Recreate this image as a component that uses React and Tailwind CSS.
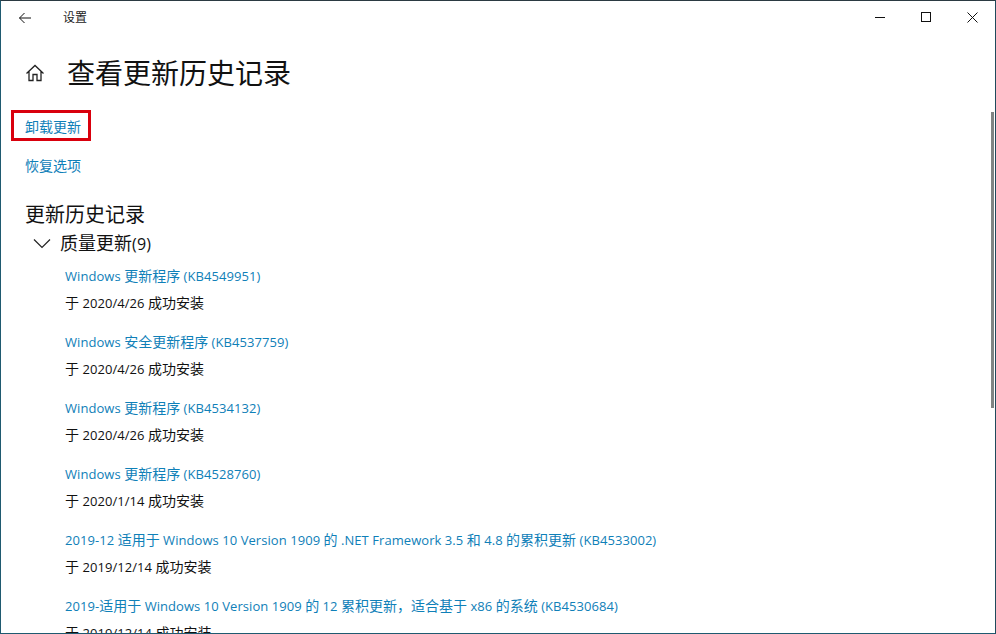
const LATIN = /([\u0020-\u007e]+)/;
function Mixed({ text, latin = "text-[13px] tracking-[0.06px]" }) {
  return text.split(LATIN).map((part, i) =>
    i % 2 === 1 ? <span key={i} className={latin}>{part}</span> : part
  );
}
function Update({ title, date }) {
  return (
    <div className="flex flex-col">
      <div className="h-[26px] leading-[26px] text-[14px] text-[#0f80b8] whitespace-nowrap"><Mixed text={title} /></div>
      <div className="h-[26px] mt-[1px] leading-[26px] text-[14px] text-[#111] whitespace-nowrap"><Mixed text={date} /></div>
    </div>
  );
}
const updates = [
  ["Windows 更新程序 (KB4549951)", "于 2020/4/26 成功安装"],
  ["Windows 安全更新程序 (KB4537759)", "于 2020/4/26 成功安装"],
  ["Windows 更新程序 (KB4534132)", "于 2020/4/26 成功安装"],
  ["Windows 更新程序 (KB4528760)", "于 2020/1/14 成功安装"],
  ["2019-12 适用于 Windows 10 Version 1909 的 .NET Framework 3.5 和 4.8 的累积更新 (KB4533002)", "于 2019/12/14 成功安装"],
  ["2019-适用于 Windows 10 Version 1909 的 12 累积更新，适合基于 x86 的系统 (KB4530684)", "于 2019/12/14 成功安装"],
];
export default function App() {
  return (
    <div className="relative w-[996px] h-[634px] overflow-hidden bg-white border border-t-[#2b3a42] border-b-[#1f5a70] border-l-[#1f5a70] border-r-[#1f4a5c] font-['Open_Sans','Noto_Sans_CJK_SC',sans-serif] text-[#111]">
      <div className="flex items-center h-[33px]">
        <svg className="ml-[18px]" width="12" height="12" viewBox="0 0 12 12" fill="none" stroke="#111" strokeWidth="1"><path d="M0.5 6H12M5.5 1 .5 6l5 5" /></svg>
        <span className="ml-[32px] text-[12px] text-[#222]">设置</span>
        <div className="ml-auto flex items-center">
          <svg className="mr-[35px]" width="11" height="11" viewBox="0 0 11 11" stroke="#111" strokeWidth="1"><path d="M0 5.5H10" /></svg>
          <svg className="mr-[35px]" width="11" height="11" viewBox="0 0 11 11" fill="none" stroke="#111" strokeWidth="1"><rect x="0.5" y="0.5" width="9" height="9" /></svg>
          <svg className="mr-[17px]" width="11" height="11" viewBox="0 0 11 11" stroke="#111" strokeWidth="1"><path d="M.5.5 10.5 10.5M10.5.5 .5 10.5" /></svg>
        </div>
      </div>
      <div className="flex items-center h-[44px] mt-[17px]">
        <svg className="ml-[24px]" width="20" height="20" viewBox="0 0 20 20" fill="none" stroke="#222" strokeWidth="1.3"><path d="M1.5 10.5 10 2.5l8.5 8M4 8.5V17.5H8V11.5H12V17.5H16V8.5" /></svg>
        <h1 className="ml-[22px] text-[28px] font-normal leading-[44px] text-[#111]">查看更新历史记录</h1>
      </div>
      <div className="ml-[10px] mt-[15px] w-[80px] h-[31px] border-[3px] border-[#d9000d] flex items-center pl-[11px] pt-[2px] text-[14px] text-[#0f80b8] whitespace-nowrap">卸载更新</div>
      <div className="ml-[24px] mt-[12px] text-[14px] leading-[26px] text-[#0f80b8]">恢复选项</div>
      <div className="ml-[24px] mt-[21px] text-[20px] leading-[29px] text-[#111]">更新历史记录</div>
      <div className="flex items-center h-[28px]">
        <svg className="ml-[32px]" width="18" height="11" viewBox="0 0 18 11" fill="none" stroke="#222" strokeWidth="1.2"><path d="M1 1.5 9 9.5 17 1.5" /></svg>
        <span className="ml-[9px] text-[18px] text-[#111]"><Mixed text="质量更新(9)" latin="text-[16px] tracking-[0.2px]" /></span>
      </div>
      <div className="ml-[64px] mt-[6px] flex flex-col gap-[13px]">
        {updates.map(([t, d]) => <Update key={t} title={t} date={d} />)}
      </div>
      <div className="absolute right-[1px] top-[111px] w-[3px] h-[296px] bg-[#808484]" />
    </div>
  );
}
